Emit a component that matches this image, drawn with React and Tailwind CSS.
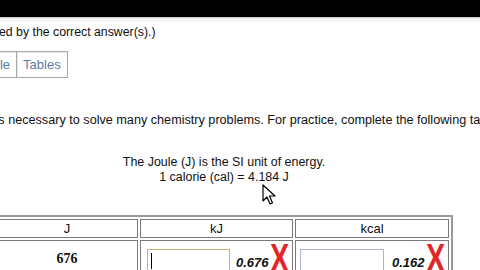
import React from "react";

export default function App() {
  const font = { fontFamily: '"Liberation Sans", Arial, sans-serif' };
  const xCls = "relative top-[-3px] ml-[1px] w-[19px] h-[24px] leading-[24px] text-[40px] text-[#e0262a] font-bold inline-block scale-x-[0.72] origin-left";
  return (
    <div className="w-[480px] h-[270px] overflow-hidden bg-white relative text-[#111]" style={font}>
      <div className="h-[17px] bg-black" />
      <div className="h-px bg-[#c8c8c8]" />
      <div className="h-[3px] bg-[#f3f3f3]" />
      <div className="h-[4px] bg-gradient-to-b from-[#fafafa] to-white" />
      <div className="text-[12.3px] leading-[15px] ml-[-1px]">ed by the correct answer(s).)</div>

      <div className="mt-[11px] ml-[-30px] flex h-[27px] border border-[#a8a8a8] w-fit">
        <div className="flex items-center pl-[8px] pr-[6px] text-[13px] text-[#5a7aa8] border-r border-[#a8a8a8] shadow-[inset_1px_1px_0_#e8e8e8]">
          Table
        </div>
        <div className="flex items-center px-[6px] text-[13px] text-[#5a7aa8] shadow-[inset_1px_1px_0_#e8e8e8]">
          Tables
        </div>
      </div>

      <div className="mt-[35px] ml-[-4.5px] whitespace-nowrap text-[12.65px] leading-[15px]">
        is necessary to solve many chemistry problems. For practice, complete the following table.
      </div>

      <div className="w-[456px] ml-[-4px] mt-[27px] text-center text-[12.45px] leading-[15px]">
        <div>The Joule (J) is the SI unit of energy.</div>
        <div>1 calorie (cal) = 4.184 J</div>
      </div>

      <table className="mt-[30px] ml-[-8px] border-separate border-spacing-[2px] border-2 border-[#9a9a9a] text-[13px]">
        <tbody>
          <tr>
            <td className="w-[142px] h-[19px] border border-[#7a7a7a] text-center leading-[17px] p-0">J</td>
            <td className="w-[153px] h-[19px] border border-[#7a7a7a] text-center leading-[17px] p-0">kJ</td>
            <td className="w-[154px] h-[19px] border border-[#7a7a7a] text-center leading-[17px] p-0">kcal</td>
          </tr>
          <tr>
            <td className="border border-[#7a7a7a] text-center align-top pt-[7px] font-bold" style={{ fontFamily: '"Liberation Serif", "Times New Roman", serif', fontSize: "14px" }}>
              676
            </td>
            <td className="border border-[#7a7a7a] align-top p-0">
              <div className="flex items-end pl-[6px] pt-[8px]">
                <div className="w-[83px] h-[24px] border border-[#cfae7a] bg-white relative">
                  <div className="absolute left-[3px] top-[3px] w-px h-[16px] bg-black" />
                </div>
                <span className="ml-[6px] mb-[3px] font-bold italic text-[13px] leading-[15px]">0.676</span>
                <span className={xCls}>X</span>
              </div>
            </td>
            <td className="border border-[#7a7a7a] align-top p-0">
              <div className="flex items-end pl-[4px] pt-[8px]">
                <div className="w-[84px] h-[24px] border border-[#a9b4c4] bg-white" />
                <span className="ml-[8px] mb-[3px] font-bold italic text-[13px] leading-[15px]">0.162</span>
                <span className={xCls}>X</span>
              </div>
            </td>
          </tr>
        </tbody>
      </table>

      <svg className="absolute left-[262px] top-[184px]" width="14" height="22" viewBox="0 0 14 22">
        <path d="M1 1 L1 17 L5 13 L8 20 L10.5 19 L7.5 12 L13 12 Z" fill="white" stroke="black" strokeWidth="1.2" strokeLinejoin="round" />
      </svg>
    </div>
  );
}
